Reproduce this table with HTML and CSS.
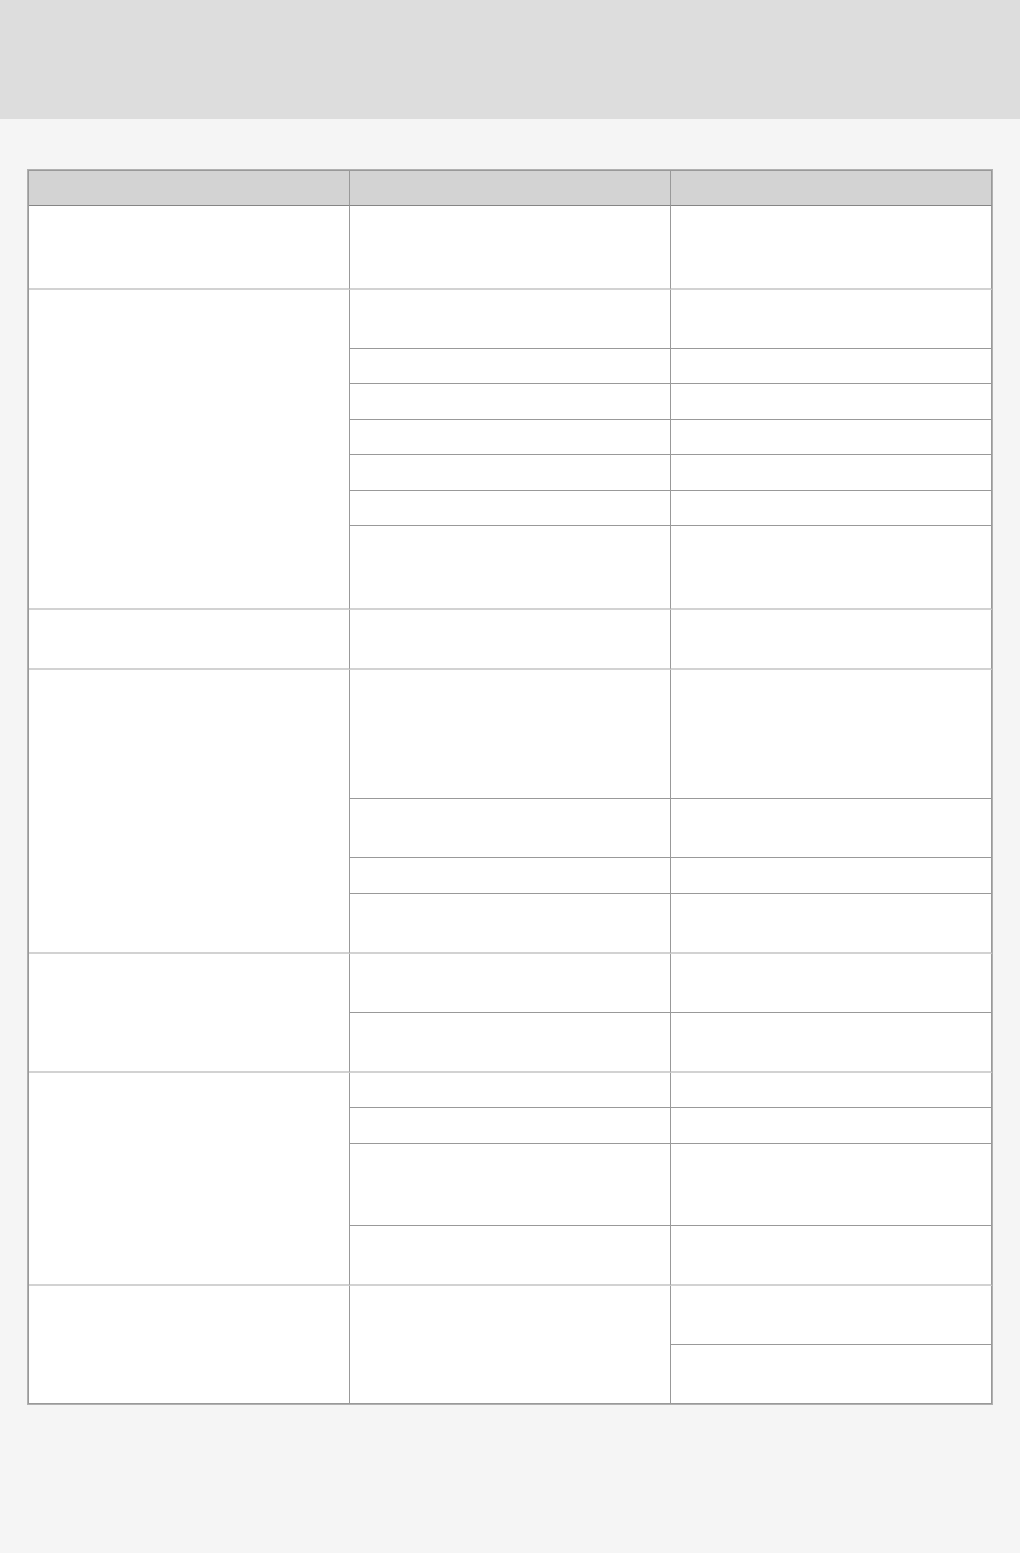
FILE: index.html
```html
<!DOCTYPE html>
<html lang="en">
<head>
<meta charset="utf-8">
<title>Table</title>
<link rel="stylesheet" href="styles.css">
</head>
<body>
<header class="topbar"></header>
<main class="content">
  <div class="table-frame">
    <table class="grid">
      <thead>
        <tr><th></th><th></th><th></th></tr>
      </thead>
      <tbody>
        <tr><td class="ge"><div class="l3"></div></td><td class="ge"><div class="l3"></div></td><td class="ge"><div class="l3"></div></td></tr>

        <tr><td rowspan="7" class="ge"></td><td><div class="l2"></div></td><td><div class="l2"></div></td></tr>
        <tr><td><div class="l1"></div></td><td><div class="l1"></div></td></tr>
        <tr><td><div class="l1"></div></td><td><div class="l1"></div></td></tr>
        <tr><td><div class="l1"></div></td><td><div class="l1"></div></td></tr>
        <tr><td><div class="l1"></div></td><td><div class="l1"></div></td></tr>
        <tr><td><div class="l1"></div></td><td><div class="l1"></div></td></tr>
        <tr><td class="ge"><div class="l3"></div></td><td class="ge"><div class="l3"></div></td></tr>

        <tr><td class="ge"><div class="l2"></div></td><td class="ge"><div class="l2"></div></td><td class="ge"><div class="l2"></div></td></tr>

        <tr><td rowspan="4" class="ge"></td><td><div class="l5"></div></td><td><div class="l5"></div></td></tr>
        <tr><td><div class="l2"></div></td><td><div class="l2"></div></td></tr>
        <tr><td><div class="l1"></div></td><td><div class="l1"></div></td></tr>
        <tr><td class="ge"><div class="l2"></div></td><td class="ge"><div class="l2"></div></td></tr>

        <tr><td rowspan="2" class="ge"></td><td><div class="l2"></div></td><td><div class="l2"></div></td></tr>
        <tr><td class="ge"><div class="l2"></div></td><td class="ge"><div class="l2"></div></td></tr>

        <tr><td rowspan="4" class="ge"></td><td><div class="l1"></div></td><td><div class="l1"></div></td></tr>
        <tr><td><div class="l1"></div></td><td><div class="l1"></div></td></tr>
        <tr><td><div class="l3"></div></td><td><div class="l3"></div></td></tr>
        <tr><td class="ge"><div class="l2"></div></td><td class="ge"><div class="l2"></div></td></tr>

        <tr><td rowspan="2"></td><td rowspan="2"></td><td><div class="l2"></div></td></tr>
        <tr><td><div class="l2"></div></td></tr>
      </tbody>
    </table>
  </div>
</main>
</body>
</html>
```

FILE: styles.css
```css
html, body {
  margin: 0;
  padding: 0;
}

body {
  background: #f5f5f5;
  font-family: "Liberation Sans", Arial, sans-serif;
  font-size: 14px;
  color: #333;
  min-height: 1553px;
}

.topbar {
  height: 119px;
  background: #dddddd;
}

.content {
  padding: 50px 27px;
}

.table-frame {
  border: 1px solid #b0b0b0;
  background: #fff;
}

.grid {
  width: 100%;
  border-collapse: separate;
  border-spacing: 0;
  table-layout: fixed;
  border-left: 1px solid #999;
  border-top: 1px solid #999;
}

.grid th {
  height: 34px;
  padding: 0;
  background: #d3d3d3;
  border-right: 1px solid #999;
  border-bottom: 1px solid #858585;
  box-sizing: content-box;
}

.grid td {
  padding: 0;
  background: #fff;
  border-right: 1px solid #999;
  border-bottom: 1px solid #999;
  vertical-align: top;
}

.grid td.ge {
  border-bottom: 2px solid #d2d2d2;
}

.l1 { height: 34.5px; }
.l2 { height: 58px; }
.l3 { height: 81.5px; }
.l5 { height: 128.5px; }
```
